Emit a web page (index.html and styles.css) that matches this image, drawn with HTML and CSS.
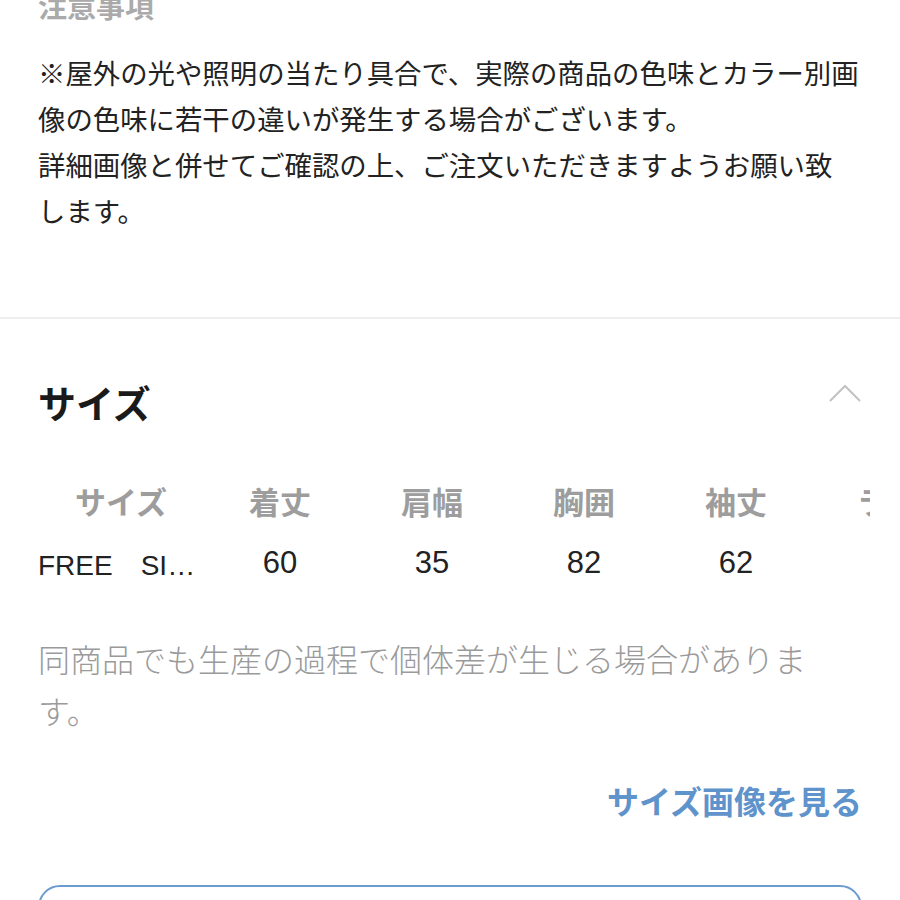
FILE: index.html
```html
<!DOCTYPE html>
<html lang="ja">
<head>
  <meta charset="UTF-8">
  <title>商品詳細</title>
  <link rel="stylesheet" href="styles.css">
</head>
<body>

<div class="page">
  <!-- Notice block -->
  <section class="notice">
    <h2 class="notice-title">注意事項</h2>
    <p class="notice-text">※屋外の光や照明の当たり具合で、実際の商品の色味とカラー別画<br>像の色味に若干の違いが発生する場合がございます。<br>詳細画像と併せてご確認の上、ご注文いただきますようお願い致<br>します。</p>
  </section>

  <div class="divider"></div>

  <!-- Size block -->
  <section class="size">
    <div class="size-head">
      <h2 class="size-title">サイズ</h2>
      <svg class="chevron" width="34" height="20" viewBox="0 0 34 20">
        <polyline points="2,18 17,3 32,18" fill="none" stroke="#c2c2c2" stroke-width="2"/>
      </svg>
    </div>

    <div class="size-table">
      <div class="row row-head">
        <div class="cell cell-first">サイズ</div>
        <div class="cell">着丈</div>
        <div class="cell">肩幅</div>
        <div class="cell">胸囲</div>
        <div class="cell">袖丈</div>
        <div class="cell">ラグ</div>
      </div>
      <div class="row row-data">
        <div class="cell cell-first">FREE　SIZE</div>
        <div class="cell num">60</div>
        <div class="cell num">35</div>
        <div class="cell num">82</div>
        <div class="cell num">62</div>
        <div class="cell num"></div>
      </div>
    </div>

    <p class="size-note">同商品でも生産の過程で個体差が生じる場合があります。</p>

    <div class="size-link-wrap">
      <a class="size-link" href="#">サイズ画像を見る</a>
    </div>

    <button class="outline-btn"></button>
  </section>
</div>

</body>
</html>
```

FILE: styles.css
```css
body {
  margin: 0;
  background: #ffffff;
  font-family: "Noto Sans CJK JP", "Noto Sans", sans-serif;
  color: #222;
}
.page {
  height: 100vh;
  overflow: hidden;
}

/* Notice */
.notice {
  padding: 0 38px 84px;
}
.notice-title {
  margin: -15px 0 0;
  font-size: 29px;
  line-height: 40px;
  font-weight: 700;
  color: #aaa;
}
.notice-text {
  margin: 24px -12px 0 0;
  font-size: 27.4px;
  line-height: 46px;
  color: #222;
}
.divider {
  height: 2px;
  background: #eeeeee;
}

/* Size */
.size {
  padding: 58px 38px 0;
}
.size-head {
  display: flex;
  justify-content: space-between;
  align-items: center;
  height: 50px;
}
.size-title {
  margin: 0;
  font-size: 38px;
  line-height: 50px;
  font-weight: 700;
  color: #1a1a1a;
}
.chevron {
  display: block;
  margin-bottom: 18px;
}
.size-table {
  margin: 42px -8px 0 0;
  overflow: hidden;
}
.row {
  display: grid;
  grid-template-columns: 166px repeat(5, 152px);
  height: 62px;
  align-items: center;
  white-space: nowrap;
}
.row-data {
  height: 64px;
}
.cell {
  text-align: center;
}
.row-head .cell {
  font-size: 31px;
  font-weight: 700;
  color: #9d9d9d;
}
.row-data .cell {
  font-family: "Liberation Sans", "Noto Sans CJK JP", sans-serif;
  font-size: 28px;
  color: #222;
}
.row-data .num {
  font-size: 31px;
}
.row-data .cell-first {
  text-align: left;
  overflow: hidden;
  text-overflow: ellipsis;
  padding-right: 6px;
}
.size-note {
  margin: 37px 0 0;
  font-size: 32px;
  line-height: 52px;
  font-weight: 300;
  color: #9a9a9a;
}
.size-link-wrap {
  margin-top: 42px;
  text-align: right;
  line-height: 44px;
}
.size-link {
  font-size: 32px;
  font-weight: 700;
  color: #5f93cc;
  text-decoration: none;
}
.outline-btn {
  display: block;
  width: 100%;
  height: 90px;
  margin-top: 56px;
  border: 2px solid #6c9ccf;
  border-radius: 22px;
  background: #fff;
}
```
